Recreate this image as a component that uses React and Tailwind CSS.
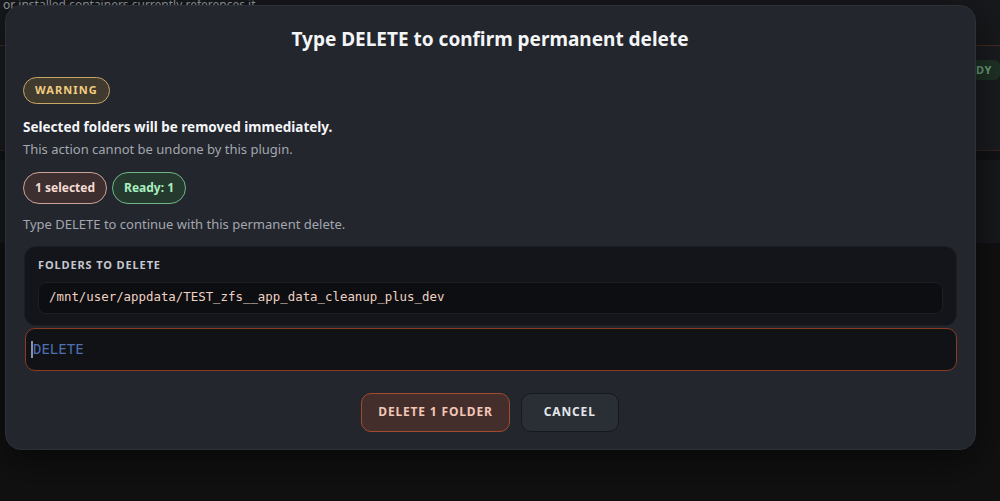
import React from "react";

const sans = { fontFamily: '"Noto Sans", "DejaVu Sans", sans-serif' };
const mono = { fontFamily: '"DejaVu Sans Mono", monospace' };

function Backdrop() {
  return (
    <div className="flex flex-col w-full h-full bg-[#111112]">
      <div className="h-[45px] overflow-hidden bg-[#18191c] px-[3px]">
        <div className="-mt-[4px] text-[12px] leading-[18px] text-[#9aa0a8]">
          or installed containers currently references it
        </div>
      </div>
      <div className="h-[105px] border-t border-[#4a2a22] bg-[#1b1c20] flex justify-end pt-[14px]">
        <span className="h-[20px] px-2 rounded-md bg-[#1f3327] text-[11px] font-bold tracking-wider text-[#6fa37f] leading-[20px]">
          READY
        </span>
      </div>
      <div className="h-[10px] bg-[#121316] border-t border-[#3a2420]" />
      <div className="h-[83px] bg-[#18191c]" />
    </div>
  );
}

export default function App() {
  return (
    <div className="relative w-[1000px] h-[501px] overflow-hidden" style={sans}>
      <Backdrop />

      {/* Confirm dialog */}
      <div className="absolute left-[5px] top-[5px] w-[971px] h-[445px] rounded-2xl bg-[#23262d] border border-[#2c3038] shadow-[0_10px_40px_rgba(0,0,0,0.6)] pt-[19px] pl-[17px] pr-[18px] flex flex-col">
        <h2 className="text-center text-[19px] leading-[28px] font-bold text-[#f4f5f7]">
          Type DELETE to confirm permanent delete
        </h2>

        <div className="mt-[23px]">
          <span className="inline-flex items-center h-[27px] px-[11px] rounded-full border border-[#c9a568] bg-[#403a2f] text-[11px] font-bold tracking-[0.1em] text-[#f2cd80]">
            WARNING
          </span>
        </div>

        <p className="mt-[13px] text-[13.5px] leading-[20px] font-bold text-[#f4f5f7]">
          Selected folders will be removed immediately.
        </p>
        <p className="mt-[3px] text-[13px] leading-[18px] text-[#a2a7b0]">
          This action cannot be undone by this plugin.
        </p>

        <div className="mt-[14px] flex gap-[5px]">
          <span className="inline-flex items-center h-[32px] px-[11px] rounded-full border border-[#c9a39b] bg-[#3d2f2f] text-[12px] font-bold text-[#f5dcd5]">
            1 selected
          </span>
          <span className="inline-flex items-center h-[32px] px-[11px] rounded-full border border-[#6fb48a] bg-[#26392f] text-[12px] font-bold text-[#a8f0c0]">
            Ready: 1
          </span>
        </div>

        <p className="mt-[11px] text-[13px] leading-[18px] text-[#a2a7b0]">
          Type DELETE to continue with this permanent delete.
        </p>

        <div className="mt-[13px] ml-[1px] rounded-xl bg-[#14151a] border border-[#1c1e23] px-[13px] pt-[10px] pb-[11px]">
          <div className="text-[11px] leading-[16px] font-bold tracking-[0.08em] text-[#c4c8d0]">
            FOLDERS TO DELETE
          </div>
          <div
            className="mt-[9px] h-[32px] flex items-center rounded-lg bg-[#0d0e12] border border-[#1d1f25] px-[10px] text-[12.4px] text-[#f0d2c2]"
            style={mono}
          >
            /mnt/user/appdata/TEST_zfs__app_data_cleanup_plus_dev
          </div>
        </div>

        {/* confirmation field, caret parked at the start */}
        <div className="mt-[2px] ml-[2px] h-[43px] flex items-center rounded-[10px] bg-[#111216] border border-[#8a3b22] px-[5px]">
          <span className="w-[2px] h-[17px] bg-[#8a93a6]" />
          <span className="text-[14px] text-[#4f6fb3]" style={mono}>
            DELETE
          </span>
        </div>

        <div className="mt-[22px] flex justify-center gap-[11px]">
          <button className="h-[39px] px-[16px] rounded-[10px] bg-[#442e2c] border border-[#a34b2f] text-[12px] font-bold tracking-[0.07em] text-[#f2c6b6]">
            DELETE 1 FOLDER
          </button>
          <button className="h-[39px] px-[22px] rounded-[10px] bg-[#2a2e35] border border-[#16181c] text-[12px] font-bold tracking-[0.07em] text-[#e2e5ea]">
            CANCEL
          </button>
        </div>
      </div>
    </div>
  );
}
